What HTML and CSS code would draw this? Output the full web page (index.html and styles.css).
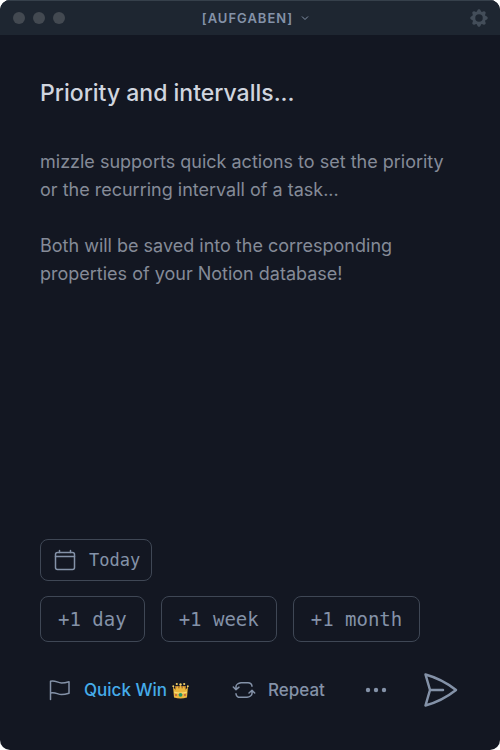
FILE: index.html
```html
<!DOCTYPE html>
<html lang="en">
<head>
<meta charset="utf-8">
<meta name="viewport" content="width=device-width, initial-scale=1">
<title>mizzle</title>
<link rel="stylesheet" href="styles.css">
</head>
<body>
<div class="window">
  <header class="titlebar">
    <div class="lights"><span class="light"></span><span class="light"></span><span class="light"></span></div>
    <button class="database" type="button">[AUFGABEN]
      <svg class="chevron" viewBox="0 0 8 8" aria-hidden="true"><path d="M1 2.5 4 5.5 7 2.5"/></svg>
    </button>
    <button class="settings" type="button" aria-label="Settings">
      <svg class="gear" viewBox="0 0 20 20" aria-hidden="true"><path fill-rule="evenodd" d="M11.49 3.17c-.38-1.56-2.6-1.56-2.98 0a1.53 1.53 0 0 1-2.286.948c-1.372-.836-2.942.734-2.106 2.106.54.886.061 2.042-.947 2.287-1.561.379-1.561 2.6 0 2.978a1.53 1.53 0 0 1 .947 2.287c-.836 1.372.734 2.942 2.106 2.106a1.53 1.53 0 0 1 2.287.947c.379 1.561 2.6 1.561 2.978 0a1.53 1.53 0 0 1 2.287-.947c1.372.836 2.942-.734 2.106-2.106a1.53 1.53 0 0 1 .947-2.287c1.561-.379 1.561-2.6 0-2.978a1.53 1.53 0 0 1-.947-2.287c.836-1.372-.734-2.942-2.106-2.106a1.53 1.53 0 0 1-2.287-.947zM10 13.4a3.4 3.4 0 1 0 0-6.8 3.4 3.4 0 0 0 0 6.8z"/></svg>
    </button>
  </header>
  <main class="task">
    <h1 class="title">Priority and intervalls...</h1>
    <div class="notes">
      <p>mizzle supports quick actions to set the priority or the recurring intervall of a task...</p>
      <p>Both will be saved into the corresponding properties of your Notion database!</p>
    </div>
    <div class="dates">
      <button class="chip chip-date" type="button">
        <svg class="line-icon calendar" viewBox="0 0 22 22" aria-hidden="true"><rect x="1.5" y="3.5" width="19" height="17" rx="2"/><path d="M1.5 7.500h19M5.500 1.500v2M16.500 1.500v2"/></svg>
        Today
      </button>
      <div class="offsets">
        <button class="chip" type="button">+1 day</button>
        <button class="chip" type="button">+1 week</button>
        <button class="chip" type="button">+1 month</button>
      </div>
    </div>
    <footer class="actions">
      <button class="action priority" type="button">
        <svg class="line-icon flag" viewBox="0 0 22 22" aria-hidden="true"><path d="M1.5 20.5V2.2c5-1.200 7 1.700 11 1.700 3 0 5-.5 7.500-1.200v11.600c-2.500.7-4.500 1.200-7.500 1.200-4 0-6-2.700-11-1.500"/></svg>
        Quick Win
        <svg class="crown" viewBox="0 0 17 17" role="img" aria-label="Crown"><path fill="#a9702d" d="M3 4h11v7H3z"/><path fill="#e9b63c" d="M1 4.500 3.500 8 5 3.500 7 7l1.500-4L10 7l2-3.500L13.500 8 16 4.500l-1 11Q8.500 17.500 2 15.500z"/><path fill="#f8dc78" d="M2 9.500q6.500 2 13 0l-.2 1.300q-6.300 1.800-12.600 0z"/><g fill="#f3d169"><circle cx="1.300" cy="4.200" r="1"/><circle cx="4.800" cy="2" r="1.100"/><circle cx="8.500" cy="2.500" r="1.200"/><circle cx="12.200" cy="2" r="1.100"/><circle cx="15.800" cy="4.200" r="1"/></g><circle cx="8.500" cy="12.800" r="1.900" fill="#279666"/><circle cx="4" cy="13" r=".9" fill="#ba4f42"/><circle cx="13" cy="13" r=".9" fill="#ba4f42"/></svg>
      </button>
      <button class="action repeat" type="button">
        <svg class="line-icon cycle" viewBox="0 0 24 20" aria-hidden="true"><path d="M1.300 7 4 9.700 7 7.200M4 9.500V6.500q0-1.500 1.500-2.500T9 2.700h7q3.500 0 4 3.500M17 13l3-2.700 2.700 2.700M20 10.500v3q0 1.500-1.500 2.500T15 17.300H8q-3.500 0-4-3.500"/></svg>
        Repeat
      </button>
      <button class="more" type="button" aria-label="More">
        <svg class="dots" viewBox="0 0 22 6" aria-hidden="true"><circle cx="3" cy="3" r="2.200"/><circle cx="11" cy="3" r="2.200"/><circle cx="19" cy="3" r="2.200"/></svg>
      </button>
      <button class="send" type="button" aria-label="Send">
        <svg class="plane" viewBox="0 0 36 36" aria-hidden="true"><path d="M7 18 2.500 2.500Q19 7 33 18 19 29 2.500 33.500zH20"/></svg>
      </button>
    </footer>
  </main>
</div>
</body>
</html>
```
FILE: styles.css
```css
* { box-sizing: border-box; }
html { background: #fff; }
body {
  margin: 0;
  font-family: Inter, "Liberation Sans", sans-serif;
  color: #8492a8;
}
button {
  margin: 0;
  padding: 0;
  border: 0;
  background: none;
  color: inherit;
  font: inherit;
  cursor: pointer;
}
svg { display: block; flex: none; }
.window {
  display: flex;
  flex-direction: column;
  min-height: 100vh;
  overflow: hidden;
  border-radius: 10px;
  background: #131722;
}
.titlebar {
  display: grid;
  grid-template-columns: 1fr auto 1fr;
  align-items: center;
  height: 35px;
  padding: 0 10px 0 13px;
  border-top: 1px solid #36404b;
  background: #1e2631;
}
.lights { display: flex; gap: 8px; }
.light {
  width: 12px;
  height: 12px;
  border-radius: 50%;
  background: #434951;
}
.database {
  display: flex;
  align-items: center;
  gap: 8px;
  padding-left: 8px;
  font-size: 13px;
  font-weight: 600;
  letter-spacing: 1px;
}
.chevron {
  width: 8px;
  height: 8px;
  fill: none;
  stroke: currentColor;
}
.settings { justify-self: end; }
.gear { width: 22px; height: 22px; fill: #434d59; }
.task {
  display: flex;
  flex: 1;
  flex-direction: column;
  padding: 40px 40px 42px;
}
.title {
  margin: 0;
  color: #d0d5df;
  font-size: 23px;
  font-weight: 500;
  line-height: 36px;
}
.notes {
  margin-top: 37px;
  color: #858b98;
  font-size: 18px;
  line-height: 28px;
}
.notes p { margin: 0 0 28px; }
.dates {
  display: flex;
  flex-direction: column;
  align-items: flex-start;
  gap: 15px;
  margin-top: auto;
}
.offsets { display: flex; flex-wrap: wrap; gap: 16px; }
.chip {
  display: flex;
  align-items: center;
  height: 46px;
  padding: 0 17px;
  border: 1px solid #3f4755;
  border-radius: 8px;
  font-family: "DejaVu Sans Mono", monospace;
  font-size: 19px;
}
.chip-date {
  gap: 13px;
  height: 42px;
  padding: 0 11px 0 13px;
  font-size: 17px;
}
.line-icon {
  width: 22px;
  height: 22px;
  fill: none;
  stroke: currentColor;
  stroke-width: 1.5;
  stroke-linecap: round;
  stroke-linejoin: round;
}
.actions {
  display: flex;
  align-items: center;
  height: 36px;
  margin-top: 30px;
  padding: 0 1px 0 9px;
}
.action {
  display: flex;
  align-items: center;
  gap: 13px;
  font-size: 17px;
  font-weight: 500;
}
.priority { color: #45acea; }
.flag { stroke: #8492a8; }
.priority .crown { width: 17px; height: 17px; margin-left: -8px; }
.repeat { gap: 12px; margin-left: 43px; }
.cycle { width: 24px; height: 20px; }
.more { margin-left: 40px; }
.dots { width: 22px; height: 6px; fill: currentColor; }
.send { margin-left: auto; }
.plane {
  width: 36px;
  height: 36px;
  fill: none;
  stroke: currentColor;
  stroke-width: 2.5;
  stroke-linecap: round;
  stroke-linejoin: round;
}
```
